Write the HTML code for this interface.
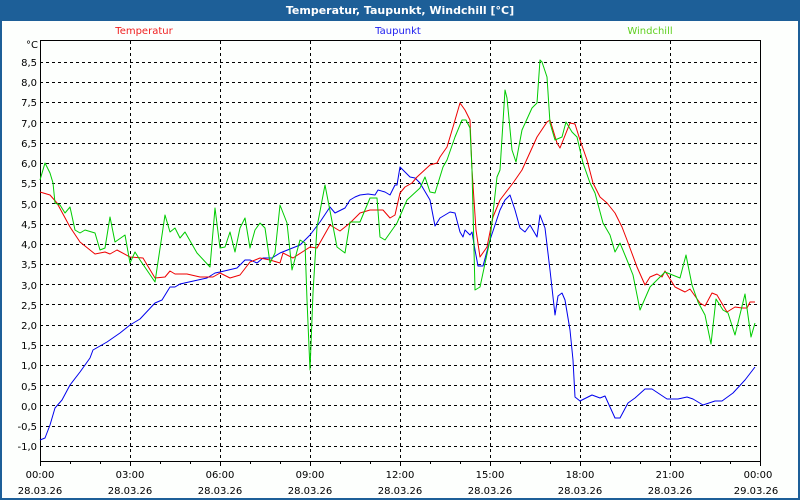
<!DOCTYPE html>
<html><head><meta charset="utf-8"><style>
html,body{margin:0;padding:0;background:#fff;}
body{width:800px;height:500px;overflow:hidden;font-family:"DejaVu Sans","Liberation Sans",sans-serif;}
</style></head><body>
<svg width="800" height="500" xmlns="http://www.w3.org/2000/svg" font-family="DejaVu Sans, Liberation Sans, sans-serif">
<rect x="0" y="0" width="800" height="500" fill="#1d5f98"/>
<rect x="2" y="21" width="796" height="477" fill="#fdfffd"/>
<text x="400" y="14" fill="#fff" font-size="11" font-weight="bold" text-anchor="middle">Temperatur, Taupunkt, Windchill [°C]</text>
<text x="144" y="34" fill="#f02020" font-size="10" text-anchor="middle">Temperatur</text>
<text x="398" y="34" fill="#2020f0" font-size="10" text-anchor="middle">Taupunkt</text>
<text x="650" y="34" fill="#60d020" font-size="10" text-anchor="middle">Windchill</text>
<g stroke="#000" stroke-width="1" stroke-dasharray="3,3" fill="none">
<path d="M40 62.5H760M40 82.5H760M40 102.5H760M40 122.5H760M40 143.5H760M40 163.5H760M40 183.5H760M40 203.5H760M40 224.5H760M40 244.5H760M40 264.5H760M40 284.5H760M40 304.5H760M40 325.5H760M40 345.5H760M40 365.5H760M40 385.5H760M40 405.5H760M40 426.5H760M40 446.5H760"/>
<path d="M130.5 41V461M220.5 41V461M310.5 41V461M400.5 41V461M490.5 41V461M580.5 41V461M670.5 41V461"/>
</g>
<rect x="40.5" y="40.5" width="720" height="421" fill="none" stroke="#000" stroke-width="1"/>
<path d="M40.5 461V466M70.5 461V464M100.5 461V464M130.5 461V466M160.5 461V464M190.5 461V464M220.5 461V466M250.5 461V464M280.5 461V464M310.5 461V466M340.5 461V464M370.5 461V464M400.5 461V466M430.5 461V464M460.5 461V464M490.5 461V466M520.5 461V464M550.5 461V464M580.5 461V466M610.5 461V464M640.5 461V464M670.5 461V466M700.5 461V464M730.5 461V464M760.5 461V466" stroke="#000"/>
<g font-size="10" fill="#000" text-anchor="end">
<text x="38" y="48">°C</text>
<text x="37" y="66">8,5</text><text x="37" y="86">8,0</text><text x="37" y="106">7,5</text><text x="37" y="127">7,0</text><text x="37" y="147">6,5</text><text x="37" y="167">6,0</text><text x="37" y="187">5,5</text><text x="37" y="208">5,0</text><text x="37" y="228">4,5</text><text x="37" y="248">4,0</text><text x="37" y="268">3,5</text><text x="37" y="289">3,0</text><text x="37" y="309">2,5</text><text x="37" y="329">2,0</text><text x="37" y="349">1,5</text><text x="37" y="369">1,0</text><text x="37" y="390">0,5</text><text x="37" y="410">0,0</text><text x="37" y="430">-0,5</text><text x="37" y="450">-1,0</text>
</g>
<g font-size="10" fill="#000" text-anchor="middle">
<text x="40" y="478">00:00</text><text x="40" y="494">28.03.26</text>
<text x="130" y="478">03:00</text><text x="130" y="494">28.03.26</text>
<text x="220" y="478">06:00</text><text x="220" y="494">28.03.26</text>
<text x="310" y="478">09:00</text><text x="310" y="494">28.03.26</text>
<text x="400" y="478">12:00</text><text x="400" y="494">28.03.26</text>
<text x="490" y="478">15:00</text><text x="490" y="494">28.03.26</text>
<text x="580" y="478">18:00</text><text x="580" y="494">28.03.26</text>
<text x="670" y="478">21:00</text><text x="670" y="494">28.03.26</text>
<text x="758" y="478">00:00</text><text x="756" y="494">29.03.26</text>
</g>
<g fill="none" stroke-width="1" stroke-linejoin="round">
<polyline stroke="#0000ee" points="40,440 45,438 50,425 55,408 62,400 70,385 80,372 90,358 93,350 107,342 120,333 130,325 140,319 155,303 162,300 170,287 175,287 180,284 207,278 215,273 220,272 237,268 245,260 250,260 257,263 263,258 272,258 280,253 290,249 300,245 310,235 320,222 330,207 335,213 345,208 350,200 355,197 360,195 368,194 375,195 378,190 385,192 390,195 395,185 397,185 400,167 405,172 410,177 415,178 420,183 430,200 435,226 440,218 445,215 450,212 455,213 460,232 463,237 465,230 470,235 472,232 475,250 478,266 483,266 490,240 500,210 505,200 510,195 515,210 520,228 525,232 530,225 537,237 540,215 545,228 550,270 555,315 558,296 562,293 565,300 570,330 573,360 575,397 580,401 592,395 600,398 605,396 610,407 615,418 620,418 628,403 635,398 645,389 652,389 667,399 678,399 687,397 693,399 703,405 715,401 722,401 733,393 745,380 755,367"/>
<polyline stroke="#ee0000" points="40,192 50,195 57,203 70,227 80,242 95,254 105,252 110,254 117,250 130,257 143,258 155,278 165,277 170,271 175,274 187,274 200,277 213,277 220,273 230,278 240,275 250,262 260,258 270,260 280,263 283,253 293,258 310,247 317,248 330,225 340,231 350,223 360,213 370,210 383,210 390,218 395,215 400,193 405,187 412,183 417,177 430,165 437,163 440,157 447,147 453,127 460,103 465,110 470,120 472,170 476,230 480,257 487,247 493,217 500,200 513,183 522,170 537,137 547,122 550,120 557,143 560,148 570,123 575,124 580,140 587,160 593,183 600,197 607,203 615,213 622,227 627,240 637,267 645,285 650,277 657,274 662,277 665,271 675,287 685,292 690,289 700,303 705,306 712,293 717,295 727,312 735,307 742,308 747,308 750,302 755,302"/>
<polyline stroke="#00cc00" points="40,180 45,163 50,173 53,183 55,203 60,205 65,213 70,207 75,230 80,233 85,230 95,233 100,250 105,248 110,217 115,242 125,235 130,263 135,252 140,260 155,282 165,215 170,232 175,228 180,238 185,232 197,253 210,267 215,208 220,248 225,247 230,232 235,252 240,228 245,218 250,248 255,230 260,223 265,228 270,263 275,253 280,205 287,223 292,270 300,240 305,243 307,300 310,370 313,293 317,227 325,185 337,247 345,253 350,222 360,222 370,198 377,198 380,237 385,240 397,223 407,200 420,188 425,177 430,192 435,193 443,167 447,160 455,137 462,120 466,120 470,128 472,170 475,290 480,287 490,240 497,177 500,170 505,90 507,98 512,150 516,162 522,130 532,108 537,103 540,60 542,62 547,77 550,123 555,140 562,137 566,122 572,132 577,137 583,163 590,183 595,193 603,223 610,235 615,252 620,243 627,260 633,275 640,310 650,287 665,272 680,278 686,255 692,285 698,302 705,315 711,344 716,299 723,310 728,313 735,335 745,294 751,337 755,323"/>
</g>
</svg>
</body></html>
